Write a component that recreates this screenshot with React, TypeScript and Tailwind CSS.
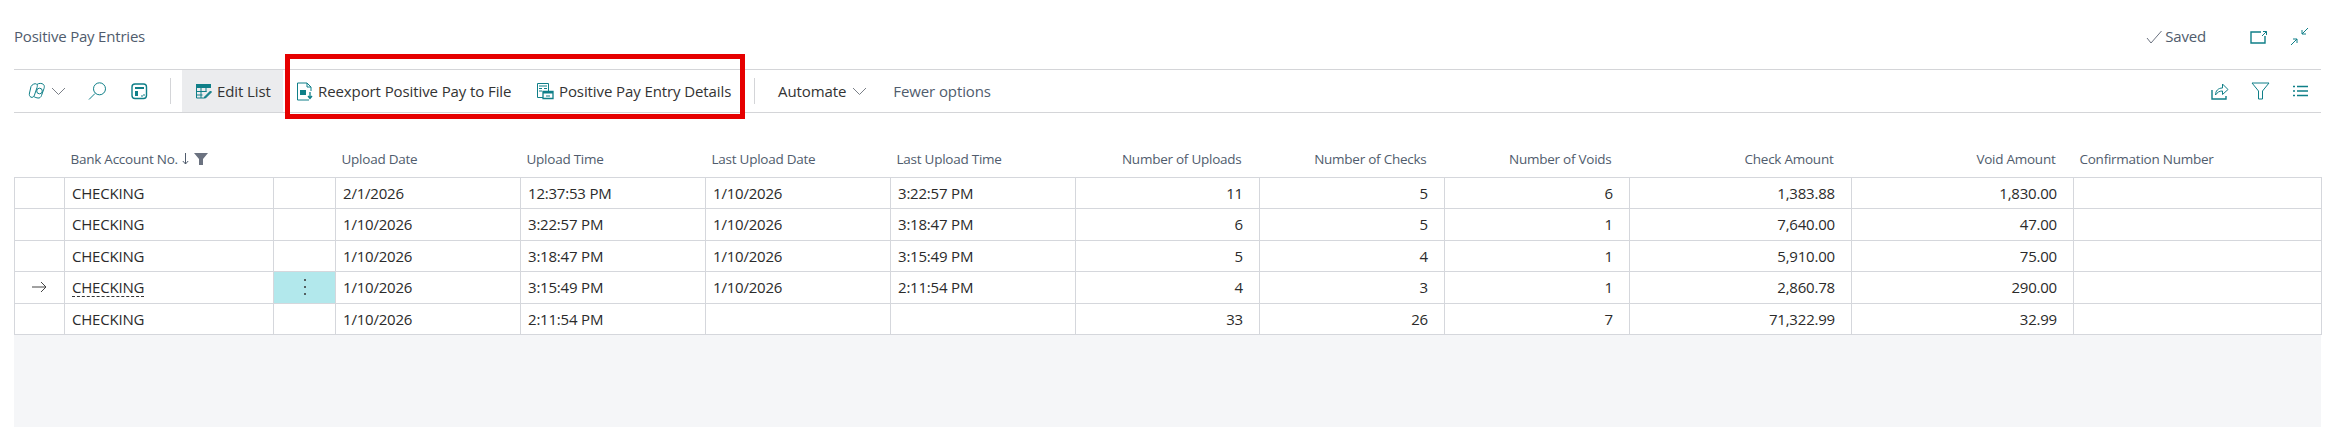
import { ReactNode } from "react";

const teal = "#0f7f88";

type Row = {
  mark?: boolean;
  height: string;
  date: string;
  time: string;
  lastDate: string;
  lastTime: string;
  uploads: string;
  checks: string;
  voids: string;
  checkAmt: string;
  voidAmt: string;
};

const rows: Row[] = [
  { height: "h-[31px]", date: "2/1/2026", time: "12:37:53 PM", lastDate: "1/10/2026", lastTime: "3:22:57 PM", uploads: "11", checks: "5", voids: "6", checkAmt: "1,383.88", voidAmt: "1,830.00" },
  { height: "h-[32px]", date: "1/10/2026", time: "3:22:57 PM", lastDate: "1/10/2026", lastTime: "3:18:47 PM", uploads: "6", checks: "5", voids: "1", checkAmt: "7,640.00", voidAmt: "47.00" },
  { height: "h-[31px]", date: "1/10/2026", time: "3:18:47 PM", lastDate: "1/10/2026", lastTime: "3:15:49 PM", uploads: "5", checks: "4", voids: "1", checkAmt: "5,910.00", voidAmt: "75.00" },
  { height: "h-[32px]", mark: true, date: "1/10/2026", time: "3:15:49 PM", lastDate: "1/10/2026", lastTime: "2:11:54 PM", uploads: "4", checks: "3", voids: "1", checkAmt: "2,860.78", voidAmt: "290.00" },
  { height: "h-[31px]", date: "1/10/2026", time: "2:11:54 PM", lastDate: "", lastTime: "", uploads: "33", checks: "26", voids: "7", checkAmt: "71,322.99", voidAmt: "32.99" },
];

function Icon({ w, h, children, className }: { w: number; h: number; children: ReactNode; className?: string }) {
  return (
    <svg width={w} height={h} viewBox={`0 0 ${w} ${h}`} fill="none" stroke={teal} strokeWidth="1" className={className}>
      {children}
    </svg>
  );
}

function Chevron({ className }: { className?: string }) {
  return (
    <svg width="15" height="8" viewBox="0 0 15 8" fill="none" stroke="#7a7f87" strokeWidth="1" className={className}>
      <path d="M1 1l6.5 6.5L14 1" />
    </svg>
  );
}

function Separator({ className }: { className?: string }) {
  return <div className={`w-px h-[26px] bg-[#d4d5d8] ${className ?? ""}`} />;
}

function HeaderCell({ children, right, pad }: { children?: ReactNode; right?: boolean; pad?: string }) {
  return (
    <th className={`h-[35px] font-normal text-[13.5px] tracking-[-0.25px] text-[#505c6d] whitespace-nowrap ${right ? "text-right pr-[18px]" : "text-left"} ${pad ?? "pl-[6px]"}`}>
      {children}
    </th>
  );
}

function Cell({ children, right }: { children?: ReactNode; right?: boolean }) {
  return (
    <td className={`border border-[#d5d7dc] p-0 text-[15px] leading-[20px] tracking-[-0.2px] text-[#2b2b2b] ${right ? "text-right pr-[16px]" : "text-left pl-[7px]"}`}>
      {children}
    </td>
  );
}

export default function App() {
  return (
    <div className="relative w-[2338px] h-[427px] overflow-hidden bg-white pl-[14px] pr-[17px] font-['Open_Sans',sans-serif]">
      {/* Title bar */}
      <div className="flex items-center h-[69px] pt-[4px]">
        <span className="text-[15px] tracking-[-0.2px] text-[#505c6d]">Positive Pay Entries</span>
        <div className="ml-auto flex items-center">
          <Icon w={17} h={14} className="mr-[2px]">
            <path d="M1 8l4 5L15.5 1" stroke="#6b7280" />
          </Icon>
          <span className="text-[15px] tracking-[-0.2px] text-[#505c6d]">Saved</span>
          <Icon w={18} h={14} className="ml-[44px]">
            <path d="M11 2H1v11h14V6" strokeWidth="1.4" />
            <path d="M12 6l4.5-4.5M13 1.5h3.5V5" />
          </Icon>
          <Icon w={19} h={19} className="ml-[22px] mr-[12px]">
            <path d="M1 18l6-6M3 12h4v4" />
            <path d="M18 1l-6 6M12 3v4h4" />
          </Icon>
        </div>
      </div>

      {/* Action bar */}
      <div className="flex items-center h-[44px] border-y border-[#d4d5d8] text-[15px] tracking-[-0.1px] text-[#333]">
        <Icon w={20} h={18} className="ml-[14px]">
          <path d="M3 4.5C4 2.5 7 1 8.5 2c1 .7 1 2 .5 3.5L6.5 13c-.6 1.8-2 2.8-3.5 2.2C1.5 14.5 1 13 1.5 11z" />
          <path d="M9 2.5c1.5-1.5 5-1.5 6.5 0 1 1 1 2.5.5 4l-2.5 7c-.6 1.8-2 2.8-3.5 2.5-1.3-.2-3-.5-4-1.5" />
          <circle cx="11.5" cy="9" r="2.8" />
        </Icon>
        <Chevron className="ml-[3px]" />
        <Icon w={19} h={18} className="ml-[22px]">
          <circle cx="11.5" cy="6.8" r="6" />
          <path d="M7 11.5L1 17.5" />
        </Icon>
        <Icon w={17} h={17} className="ml-[24px]">
          <rect x="1" y="1" width="14.5" height="14.5" rx="3" strokeWidth="1.4" />
          <path d="M4 4h9v2H4zM4 8h3v5H4z" fill={teal} stroke="none" />
          <path d="M10 13h3v-3" strokeDasharray="2 1" />
        </Icon>
        <Separator className="ml-[22px]" />
        <div className="ml-[11px] flex items-center h-full w-[101px] pl-[13px] bg-[#ebecee]">
          <Icon w={17} h={16}>
            <path d="M1 1h15v4H1z" fill={teal} stroke="none" />
            <path d="M1.5 5v10h8M6 5v10M11 5v4M1.5 8.5h10M1.5 12h6" />
            <path d="M9.5 14l6-6 1 1-6 6h-1z" fill={teal} />
          </Icon>
          <span className="ml-[5px]">Edit List</span>
        </div>
        <Icon w={17} h={19} className="ml-[13px]">
          <path d="M11 1H1.5v17H13M11 1l4 4v4M11 1v4h4" />
          <path d="M4 8h6v5H4z" fill={teal} stroke="none" />
          <path d="M14 10v6M12 14l2 2.5 2-2.5" strokeWidth="1.3" />
        </Icon>
        <span className="ml-[5px] w-[193px] whitespace-nowrap">Reexport Positive Pay to File</span>
        <Icon w={18} h={18} className="ml-[25px]">
          <path d="M1.5 1.5h11v14h-11z" />
          <path d="M3 4h8M3 6.5h3M8 6.5h3M3 9h3" />
          <path d="M7 9.5h10v7H7z" fill="#fff" strokeWidth="1.3" />
          <path d="M7 9.5h10v2H7z" fill={teal} stroke="none" />
          <path d="M10 14h4" />
        </Icon>
        <span className="ml-[5px] w-[171px] whitespace-nowrap">Positive Pay Entry Details</span>
        <Separator className="ml-[24px]" />
        <span className="ml-[23px]">Automate</span>
        <Chevron className="ml-[6px]" />
        <span className="ml-[26px] text-[#505c6d]">Fewer options</span>
        <div className="ml-auto flex items-center mr-[12px]">
          <Icon w={18} h={18}>
            <path d="M1 8v9h14v-3" strokeWidth="1.4" />
            <path d="M4.5 13c0-4 2.5-7 7-7V2l5.5 5.5-5.5 5V9c-3 0-5 1-7 4z" />
          </Icon>
          <Icon w={19} h={18} className="ml-[22px]">
            <path d="M1 1h17l-6.5 8v8h-4V9z" />
          </Icon>
          <Icon w={17} h={12} className="ml-[22px]">
            <path d="M1 1.5h2M5 1.5h11M1 6h2M5 6h11M1 10.5h2M5 10.5h11" strokeWidth="1.5" />
          </Icon>
        </div>
      </div>

      {/* Grid */}
      <table className="mt-[29px] table-fixed border-collapse w-[2307px]">
        <colgroup>
          <col className="w-[50px]" />
          <col className="w-[209px]" />
          <col className="w-[62px]" />
          <col className="w-[185px]" />
          <col className="w-[185px]" />
          <col className="w-[185px]" />
          <col className="w-[185px]" />
          <col className="w-[184px]" />
          <col className="w-[185px]" />
          <col className="w-[185px]" />
          <col className="w-[222px]" />
          <col className="w-[222px]" />
          <col className="w-[248px]" />
        </colgroup>
        <thead>
          <tr>
            <HeaderCell />
            <HeaderCell>
              <span className="inline-flex items-center">
                Bank Account No.
                <svg width="7" height="12" viewBox="0 0 7 12" fill="none" stroke="#505c6d" className="ml-[4px]">
                  <path d="M3.5 0v11M.8 8l2.7 3 2.7-3" />
                </svg>
                <svg width="14" height="12" viewBox="0 0 14 12" fill="#6b7280" className="ml-[5px]">
                  <path d="M0 0h14L9 6v6H5V6z" />
                </svg>
              </span>
            </HeaderCell>
            <HeaderCell />
            <HeaderCell>Upload Date</HeaderCell>
            <HeaderCell>Upload Time</HeaderCell>
            <HeaderCell>Last Upload Date</HeaderCell>
            <HeaderCell>Last Upload Time</HeaderCell>
            <HeaderCell right>Number of Uploads</HeaderCell>
            <HeaderCell right>Number of Checks</HeaderCell>
            <HeaderCell right>Number of Voids</HeaderCell>
            <HeaderCell right>Check Amount</HeaderCell>
            <HeaderCell right>Void Amount</HeaderCell>
            <HeaderCell pad="pl-[6px]">Confirmation Number</HeaderCell>
          </tr>
        </thead>
        <tbody>
          {rows.map((r, i) => (
            <tr key={i} className={r.height}>
              <Cell>
                {r.mark && (
                  <svg width="15" height="12" viewBox="0 0 15 12" fill="none" stroke="#444" className="ml-[10px]">
                    <path d="M0 6h14M9 1l5 5-5 5" />
                  </svg>
                )}
              </Cell>
              <Cell>
                {r.mark ? <span className="inline-block leading-[17px] border-b border-dashed border-[#333]">CHECKING</span> : "CHECKING"}
              </Cell>
              {r.mark ? (
                <td className="border border-[#d5d7dc] bg-[#b2e8ec] p-0">
                  <svg width="4" height="18" viewBox="0 0 4 18" fill="#333" className="mx-auto">
                    <circle cx="2" cy="2" r="1" />
                    <circle cx="2" cy="9" r="1" />
                    <circle cx="2" cy="16" r="1" />
                  </svg>
                </td>
              ) : (
                <Cell />
              )}
              <Cell>{r.date}</Cell>
              <Cell>{r.time}</Cell>
              <Cell>{r.lastDate}</Cell>
              <Cell>{r.lastTime}</Cell>
              <Cell right>{r.uploads}</Cell>
              <Cell right>{r.checks}</Cell>
              <Cell right>{r.voids}</Cell>
              <Cell right>{r.checkAmt}</Cell>
              <Cell right>{r.voidAmt}</Cell>
              <Cell />
            </tr>
          ))}
        </tbody>
      </table>
      <div className="h-[93px] bg-[#f5f6f8]" />

      {/* Annotation box drawn over the screenshot */}
      <div className="absolute left-[285px] top-[54px] w-[460px] h-[65px] border-[5px] border-[#e60000] pointer-events-none" />
    </div>
  );
}
